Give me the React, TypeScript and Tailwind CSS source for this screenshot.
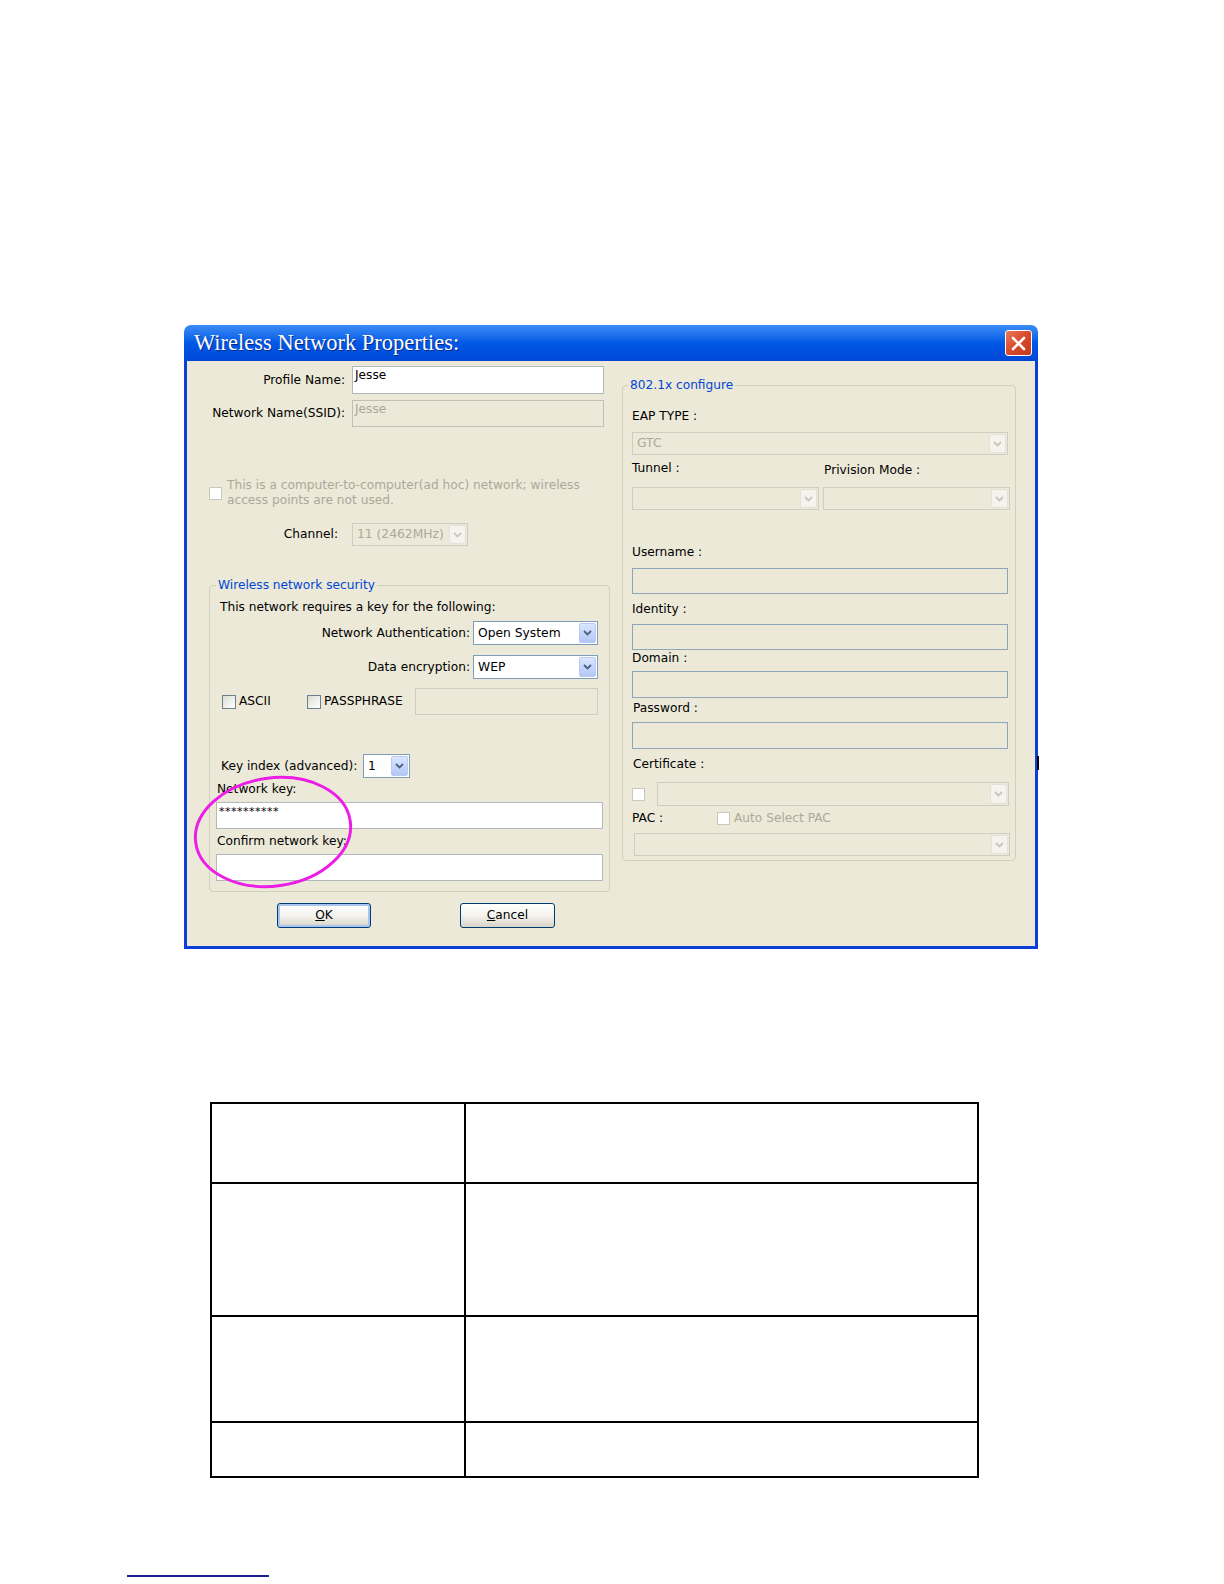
import type { ReactNode } from "react";

const label = "text-[12.2px] leading-[15px] whitespace-nowrap";

function Chevron({ disabled }: { disabled?: boolean }) {
  return (
    <svg width="9" height="6" viewBox="0 0 9 6">
      <path
        d="M1 1 L4.5 4.5 L8 1"
        fill="none"
        stroke={disabled ? "#c9c7ba" : "#4d6185"}
        strokeWidth="1.8"
      />
    </svg>
  );
}

function Combo({
  size,
  value,
  disabled = false,
}: {
  size: string;
  value?: string;
  disabled?: boolean;
}) {
  return (
    <div
      className={`${size} flex shrink-0 items-stretch border p-px ${
        disabled ? "border-[#cfcdc2] bg-[#ece9d8]" : "border-[#7f9db9] bg-white"
      }`}
    >
      <span
        className={`flex flex-1 items-center overflow-hidden whitespace-nowrap pl-[3px] text-[12.3px] ${
          disabled ? "text-[#aca899]" : "text-black"
        }`}
      >
        {value}
      </span>
      <span
        className={`flex w-[17px] items-center justify-center rounded-[2px] border ${
          disabled
            ? "border-[#e4e2d8] bg-[#f4f3ee]"
            : "border-[#b9c9f2] bg-gradient-to-b from-[#dbe6fe] to-[#b3c6f5]"
        }`}
      >
        <Chevron disabled={disabled} />
      </span>
    </div>
  );
}

function Box({ size, tone, children }: { size: string; tone: string; children?: ReactNode }) {
  return (
    <div className={`${size} ${tone} shrink-0 border px-[2px] pt-[1px] text-[12.2px] leading-[15px]`}>
      {children}
    </div>
  );
}

function Check({ disabled = false }: { disabled?: boolean }) {
  return (
    <span
      className={`inline-block shrink-0 border ${
        disabled
          ? "h-[13px] w-[13px] border-[#cac8bb] bg-white"
          : "h-[14px] w-[14px] border-[#6f7f8f] bg-gradient-to-br from-[#dcdcd6] to-white"
      }`}
    />
  );
}

function XpButton({ children, isDefault }: { children: ReactNode; isDefault?: boolean }) {
  return (
    <div
      className={`flex h-[25px] items-center justify-center rounded-[3px] border border-[#003c74] bg-gradient-to-b from-white via-[#f4f3ee] to-[#d8d4c8] text-[12.2px] ${
        isDefault ? "w-[94px] shadow-[inset_0_0_0_2px_#a8c4f0]" : "w-[95px]"
      }`}
    >
      {children}
    </div>
  );
}

export default function App() {
  return (
    <div className="relative min-h-[1584px] w-[1224px] bg-white font-['DejaVu_Sans',Verdana,sans-serif] text-black">
      <div className="pl-[184px] pt-[325px]">
        <div className="relative w-[854px]">
          {/* Title bar */}
          <div className="flex h-[36px] items-center justify-between rounded-t-[7px] bg-gradient-to-b from-[#3b8cf5] via-[#0058e6] to-[#0047d6] pl-[10px] pr-[6px]">
            <span className="font-['Liberation_Serif',serif] text-[22.5px] leading-[24px] text-white [text-shadow:1px_1px_0_#0a2a8a]">
              Wireless Network Properties:
            </span>
            <div className="flex h-[26px] w-[27px] items-center justify-center rounded-[3px] border border-white bg-gradient-to-br from-[#e9795a] via-[#d9482a] to-[#c13b1e]">
              <svg width="15" height="15" viewBox="0 0 15 15">
                <path d="M2 2 L13 13 M13 2 L2 13" stroke="white" strokeWidth="2.6" strokeLinecap="round" />
              </svg>
            </div>
          </div>

          {/* Body */}
          <div className="flex h-[588px] border-x-[3px] border-b-[3px] border-[#0b3fd7] bg-[#ece9d8] pl-[22px]">
            {/* Left column */}
            <div className="flex w-[401px] flex-col">
              <div className="mt-[5px] flex items-center">
                <span className={`${label} w-[136px] text-right`}>Profile Name:</span>
                <div className="ml-[7px]">
                  <Box size="w-[252px] h-[28px]" tone="bg-white border-[#b3b8bd]">
                    Jesse
                  </Box>
                </div>
              </div>
              <div className="mt-[6px] flex items-center">
                <span className={`${label} w-[136px] text-right`}>Network Name(SSID):</span>
                <div className="ml-[7px]">
                  <Box size="w-[252px] h-[27px]" tone="bg-[#ece9d8] border-[#c2c0b6] text-[#aca899]">
                    Jesse
                  </Box>
                </div>
              </div>

              <div className="mt-[51px] flex items-center">
                <Check disabled />
                <div className={`${label} ml-[5px] text-[#aca899]`}>
                  <div>This is a computer-to-computer(ad hoc) network; wireless</div>
                  <div>access points are not used.</div>
                </div>
              </div>

              <div className="mt-[15px] flex items-center">
                <span className={`${label} w-[129px] text-right`}>Channel:</span>
                <div className="ml-[14px]">
                  <Combo size="w-[116px] h-[23px]" value="11 (2462MHz)" disabled />
                </div>
              </div>

              <fieldset className="mt-[32px] rounded-[4px] border border-[#d0d0bf] pb-[10px]">
                <legend className={`${label} ml-[6px] px-[2px] text-[#0046d5]`}>
                  Wireless network security
                </legend>
                <div className={`${label} ml-[10px] mt-[7px]`}>
                  This network requires a key for the following:
                </div>
                <div className="mt-[6px] flex items-center justify-end pr-[11px]">
                  <span className={label}>Network Authentication:</span>
                  <div className="ml-[3px]">
                    <Combo size="w-[125px] h-[24px]" value="Open System" />
                  </div>
                </div>
                <div className="mt-[10px] flex items-center justify-end pr-[11px]">
                  <span className={label}>Data encryption:</span>
                  <div className="ml-[3px]">
                    <Combo size="w-[125px] h-[24px]" value="WEP" />
                  </div>
                </div>
                <div className="mt-[9px] flex items-center pl-[12px] pr-[11px]">
                  <div className="flex w-[85px] items-center">
                    <Check />
                    <span className={`${label} ml-[3px]`}>ASCII</span>
                  </div>
                  <div className="flex items-center">
                    <Check />
                    <span className={`${label} ml-[3px]`}>PASSPHRASE</span>
                  </div>
                  <div className="ml-auto">
                    <Box size="w-[183px] h-[27px]" tone="bg-[#ece9d8] border-[#cfcdc2]" />
                  </div>
                </div>
                <div className="mt-[39px] flex items-center pl-[11px]">
                  <span className={`${label} w-[142px]`}>Key index (advanced):</span>
                  <Combo size="w-[47px] h-[24px]" value="1" />
                </div>
                <div className={`${label} ml-[7px] mt-[4px]`}>Network key:</div>
                <div className="ml-[6px] mt-[5px]">
                  <Box size="w-[387px] h-[27px]" tone="bg-white border-[#b3b8bd]">
                    <span className="text-[11px] tracking-[0.5px]">**********</span>
                  </Box>
                </div>
                <div className={`${label} ml-[7px] mt-[5px]`}>Confirm network key:</div>
                <div className="ml-[6px] mt-[5px]">
                  <Box size="w-[387px] h-[27px]" tone="bg-white border-[#b3b8bd]" />
                </div>
              </fieldset>

              <div className="mt-[11px] flex">
                <div className="ml-[68px]">
                  <XpButton isDefault>
                    <span className="underline">O</span>K
                  </XpButton>
                </div>
                <div className="ml-[89px]">
                  <XpButton>
                    <span className="underline">C</span>ancel
                  </XpButton>
                </div>
              </div>
            </div>

            {/* Right column */}
            <fieldset className="ml-[12px] mt-[17px] w-[392px] self-start rounded-[4px] border border-[#d0d0bf] pb-[4px] pl-[9px] pr-[5px]">
              <legend className={`${label} -ml-[4px] px-[2px] text-[#0046d5]`}>802.1x configure</legend>
              <div className={`${label} mt-[16px]`}>EAP TYPE :</div>
              <div className="mt-[8px]">
                <Combo size="w-[376px] h-[23px]" value="GTC" disabled />
              </div>
              <div className="mt-[6px] grid grid-cols-2 gap-x-[4px]">
                <span className={label}>Tunnel :</span>
                <span className={`${label} mt-[2px] pl-[1px]`}>Privision Mode :</span>
              </div>
              <div className="mt-[9px] grid grid-cols-2 gap-x-[4px]">
                <Combo size="w-full h-[23px]" disabled />
                <Combo size="w-full h-[23px]" disabled />
              </div>
              <div className={`${label} mt-[35px]`}>Username :</div>
              <div className="mt-[8px]">
                <Box size="w-[376px] h-[26px]" tone="bg-[#ece9d8] border-[#8fa6ba]" />
              </div>
              <div className={`${label} mt-[8px]`}>Identity :</div>
              <div className="mt-[7px]">
                <Box size="w-[376px] h-[26px]" tone="bg-[#ece9d8] border-[#8fa6ba]" />
              </div>
              <div className={`${label} mt-[1px]`}>Domain :</div>
              <div className="mt-[5px]">
                <Box size="w-[376px] h-[27px]" tone="bg-[#ece9d8] border-[#8fa6ba]" />
              </div>
              <div className={`${label} ml-[1px] mt-[3px]`}>Password :</div>
              <div className="mt-[6px]">
                <Box size="w-[376px] h-[27px]" tone="bg-[#ece9d8] border-[#8fa6ba]" />
              </div>
              <div className={`${label} ml-[1px] mt-[8px]`}>Certificate :</div>
              <div className="mt-[10px] flex items-center">
                <Check disabled />
                <div className="ml-[12px]">
                  <Combo size="w-[352px] h-[24px]" disabled />
                </div>
              </div>
              <div className="mt-[5px] flex h-[15px] items-center">
                <span className={`${label} w-[85px]`}>PAC :</span>
                <Check disabled />
                <span className={`${label} ml-[4px] text-[#aca899]`}>Auto Select PAC</span>
              </div>
              <div className="ml-[2px] mt-[7px]">
                <Combo size="w-[376px] h-[23px]" disabled />
              </div>
            </fieldset>
          </div>

          {/* Magenta highlight ellipse */}
          <svg
            className="pointer-events-none absolute left-[6px] top-[445px]"
            width="170"
            height="125"
            viewBox="0 0 170 125"
          >
            <ellipse
              cx="83"
              cy="62"
              rx="78"
              ry="54"
              transform="rotate(-8 83 62)"
              fill="none"
              stroke="#ec1ee6"
              strokeWidth="3"
            />
          </svg>

          {/* small stray mark at the right edge */}
          <div className="absolute left-[853px] top-[431px] h-[14px] w-[2px] bg-black" />
        </div>
      </div>

      <table className="ml-[210px] mt-[153px] w-[769px] border-collapse">
        <tbody>
          <tr className="h-[80px]">
            <td className="w-[254px] border-2 border-black" />
            <td className="border-2 border-black" />
          </tr>
          <tr className="h-[133px]">
            <td className="border-2 border-black" />
            <td className="border-2 border-black" />
          </tr>
          <tr className="h-[106px]">
            <td className="border-2 border-black" />
            <td className="border-2 border-black" />
          </tr>
          <tr className="h-[55px]">
            <td className="border-2 border-black" />
            <td className="border-2 border-black" />
          </tr>
        </tbody>
      </table>

      <div className="ml-[127px] mt-[97px] h-[2px] w-[142px] bg-[#1f1f8f]" />
    </div>
  );
}
